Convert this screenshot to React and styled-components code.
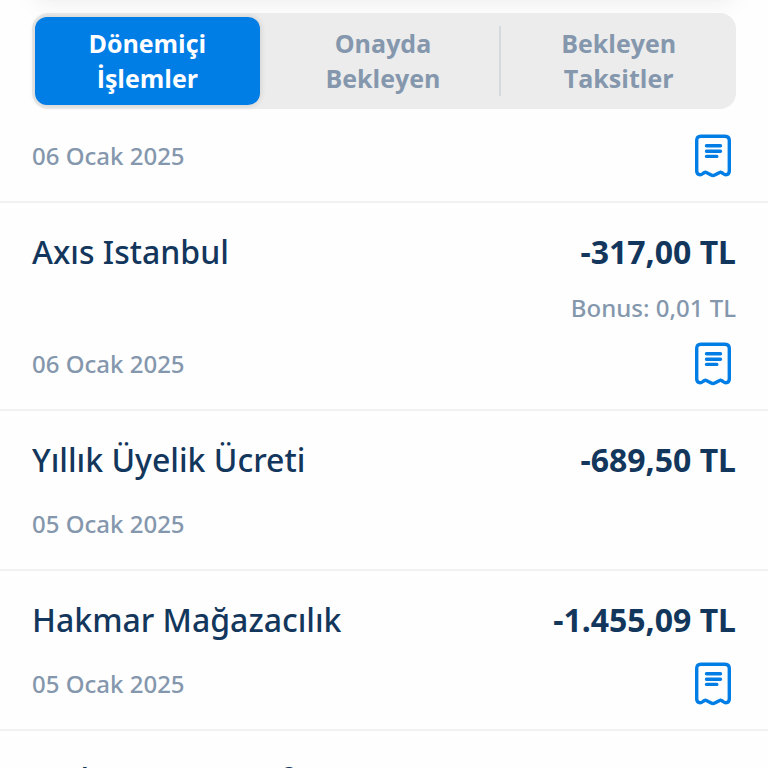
import { useState } from 'react'
import styled, { createGlobalStyle } from 'styled-components'

const color = {
    primary: '#007ee6',
    title: '#13365c',
    muted: '#8497ad',
    line: '#f0f1f3',
    track: '#ececec',
    divider: '#d5d8dc',
}

const GlobalStyle = createGlobalStyle`
    * {
        box-sizing: border-box;
    }
    body {
        margin: 0;
        background-color: #fefefe;
        font-family: "Noto Sans", sans-serif;
    }
`

const Page = styled.main`
    height: 100vh;
    overflow: hidden;
`

// bottom edge of the collapsed card, only its shadow is left
const CardEdge = styled.div`
    height: 1px;
    margin: 0 48px 12px;
    background-color: #f3f3f3;
    box-shadow: 0 -12px 24px 12px rgba(0, 0, 0, 0.08);
`

const Tabs = styled.div`
    position: relative;
    display: grid;
    grid-template-columns: repeat(3, 1fr);
    height: 96px;
    margin: 0 32px;
    border-radius: 16px;
    background-color: ${color.track};
`

const Tab = styled.button`
    margin: ${(props) => (props.$active ? '4px 7px 4px 3px' : '13px 0')};
    padding: 0 32px;
    border: 0 solid ${color.divider};
    border-right-width: ${(props) => (props.$divided ? '2px' : '0')};
    border-radius: ${(props) => (props.$active ? '12px' : '0')};
    background-color: ${(props) => (props.$active ? color.primary : 'transparent')};
    box-shadow: ${(props) => (props.$active ? '0 0 6px rgba(0, 0, 0, 0.15)' : 'none')};
    color: ${(props) => (props.$active ? '#fff' : color.muted)};
    font-family: "Open Sans", sans-serif;
    font-size: 25px;
    font-weight: 700;
    line-height: 35px;
    cursor: pointer;
`

const List = styled.ul`
    margin: 0;
    padding: 0;
    list-style: none;
`

const Item = styled.li`
    display: grid;
    row-gap: 20px;
    padding: ${(props) => (props.$short ? '25px' : '27px')} 32px 23px;
    border-bottom: 2px solid ${color.line};
`

const Line = styled.div`
    display: flex;
    justify-content: space-between;
    align-items: center;
    height: 44px;
`

const Title = styled.span`
    color: ${color.title};
    font-size: 32px;
    font-weight: 500;
    line-height: 44px;
`

const Amount = styled.span`
    color: ${color.title};
    font-size: 32px;
    font-weight: 700;
    line-height: 44px;
`

const Small = styled.span`
    color: ${color.muted};
    font-size: 24px;
    font-weight: 500;
    line-height: 28px;
    text-align: ${(props) => (props.$right ? 'right' : 'left')};
`

const ReceiptButton = styled.button`
    display: flex;
    padding: 0;
    margin-right: 4px;
    border: 0;
    background: none;
    color: ${color.primary};
    cursor: pointer;
`

const ReceiptIcon = () => {
    return (
        <svg width="38" height="44" viewBox="0 0 38 44" fill="none" stroke="currentColor" strokeLinecap="round" strokeLinejoin="round">
            <path
                strokeWidth="3.4"
                d="M7 2.200H31Q35.3 2.200 35.3 6.500V37Q35.3 40.700 31.8 40.700Q30.600 40.700 29 39.500L27.400 38.400Q26.600 37.900 25.700 38.400L20.800 41Q19 42 17.200 41L12.300 38.400Q11.400 37.900 10.600 38.400L9 39.500Q7.400 40.700 6.200 40.700Q2.700 40.700 2.700 37V6.500Q2.700 2.200 7 2.200Z"
            />
            <path strokeWidth="3.4" d="M12.500 11.800H26.500M12.500 17.200H26.500M12.500 22.400H22.800" />
        </svg>
    )
}

const tabs = ['Dönemiçi İşlemler', 'Onayda Bekleyen', 'Bekleyen Taksitler']

const transactions = [
    { id: 1, date: '06 Ocak 2025', receipt: true },
    { id: 2, title: 'Axıs Istanbul', amount: '-317,00 TL', bonus: 'Bonus: 0,01 TL', date: '06 Ocak 2025', receipt: true },
    { id: 3, title: 'Yıllık Üyelik Ücreti', amount: '-689,50 TL', date: '05 Ocak 2025' },
    { id: 4, title: 'Hakmar Mağazacılık', amount: '-1.455,09 TL', date: '05 Ocak 2025', receipt: true },
    { id: 5, title: 'Sode Eczan Varaf', amount: '-500,00 TL', date: '04 Ocak 2025' },
]

const Transaction = (props) => {
    return (
        <Item $short={!props.title}>
            {
                props.title && <Line>
                    <Title>{props.title}</Title>
                    <Amount>{props.amount}</Amount>
                </Line>
            }
            {
                props.bonus && <Small $right>{props.bonus}</Small>
            }
            <Line>
                <Small>{props.date}</Small>
                {
                    props.receipt && <ReceiptButton aria-label="Dekont">
                        <ReceiptIcon />
                    </ReceiptButton>
                }
            </Line>
        </Item>
    )
}

const App = () => {
    const [active, setActive] = useState(0)

    return (
        <Page>
            <GlobalStyle />
            <CardEdge />
            <Tabs role="tablist">
                {
                    tabs.map((tab, index) => {
                        return (
                            <Tab
                                key={tab}
                                role="tab"
                                aria-selected={index === active}
                                $active={index === active}
                                $divided={index < tabs.length - 1 && index !== active && index + 1 !== active}
                                onClick={() => setActive(index)}
                            >
                                {tab}
                            </Tab>
                        )
                    })
                }
            </Tabs>
            <List>
                {
                    transactions.map((item) => {
                        return <Transaction key={item.id} {...item} />
                    })
                }
            </List>
        </Page>
    )
}

export default App
